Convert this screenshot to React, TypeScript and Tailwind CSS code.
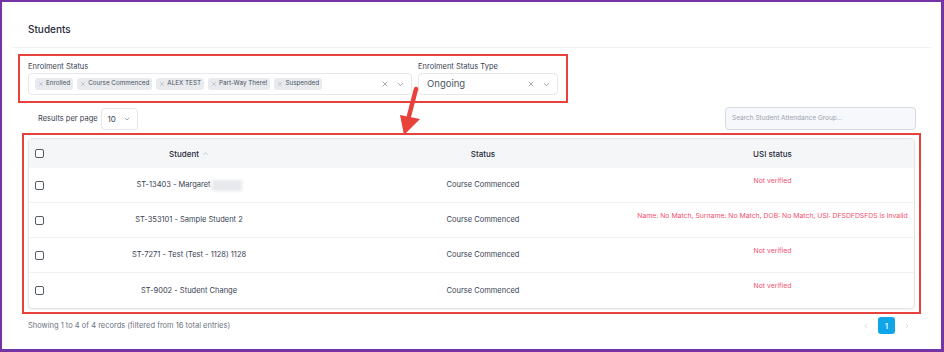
import React from "react";
import { X, ChevronDown, ChevronUp, ChevronLeft, ChevronRight } from "lucide-react";

const chips = ["Enrolled", "Course Commenced", "ALEX TEST", "Part-Way There!", "Suspended"];

const rows = [
  { student: "ST-13403 - Margaret", blur: true, status: "Course Commenced", usi: "Not verified" },
  { student: "ST-353101 - Sample Student 2", status: "Course Commenced", usi: "Name: No Match, Surname: No Match, DOB: No Match, USI: DFSDFDSFDS is Invalid" },
  { student: "ST-7271 - Test (Test - 1128) 1128", status: "Course Commenced", usi: "Not verified" },
  { student: "ST-9002 - Student Change", status: "Course Commenced", usi: "Not verified" },
];

const Checkbox = () => (
  <div className="w-[9px] h-[9px] rounded-[2px] border-[1.5px] border-[#555b63] bg-white" />
);

const Chip = ({ label }: { label: string }) => (
  <span className="flex items-center gap-[2px] h-[12px] px-[3px] rounded-[3px] bg-[#e8eaee] text-[6.3px] text-[#4b5563] whitespace-nowrap">
    <X className="w-[6px] h-[6px] text-[#9ca3af]" strokeWidth={2} />
    {label}
  </span>
);

export default function App() {
  return (
    <div className="relative w-[944px] h-[352px] overflow-hidden bg-white border-l-2 border-t-2 border-r-[3px] border-b-[3px] border-[#7434a6] font-['Inter',sans-serif]">
      <div className="mx-[10px]">
        <div className="px-[16px] pt-[20px] pb-[11px] border-b border-[#f0f1f3]">
          <h1 className="text-[10px] leading-[14px] font-medium text-[#1f2937]">Students</h1>
        </div>

        <div className="px-[16px]">
          <div className="mt-[6px] -mx-[10px] w-[550px] border-2 border-[#e8403a] px-[8px] pt-[6px] pb-[6px] flex gap-[6px]">
            <div className="w-[384px]">
              <div className="text-[7.5px] leading-[10px] text-[#374151] mb-[1px]">Enrolment Status</div>
              <div className="h-[22px] rounded-[4px] border border-[#e5e7eb] flex items-center pl-[6px] pr-[6px] gap-[4px]">
                <div className="flex flex-1 gap-[4px]">
                  {chips.map((c) => (
                    <Chip key={c} label={c} />
                  ))}
                </div>
                <X className="w-[8px] h-[8px] text-[#6b7280]" strokeWidth={1.8} />
                <ChevronDown className="w-[9px] h-[9px] text-[#6b7280] ml-[3px]" strokeWidth={1.8} />
              </div>
            </div>
            <div className="w-[140px]">
              <div className="text-[7.5px] leading-[10px] text-[#374151] mb-[1px]">Enrolment Status Type</div>
              <div className="h-[22px] rounded-[4px] border border-[#e5e7eb] flex items-center pl-[8px] pr-[6px] gap-[4px]">
                <span className="flex-1 text-[9.5px] text-[#4b5563]">Ongoing</span>
                <X className="w-[8px] h-[8px] text-[#6b7280]" strokeWidth={1.8} />
                <ChevronDown className="w-[9px] h-[9px] text-[#6b7280] ml-[3px]" strokeWidth={1.8} />
              </div>
            </div>
          </div>

          <div className="mt-[4px] flex items-center justify-between">
            <div className="flex items-center gap-[3px] pl-[10px]">
              <span className="text-[7.5px] text-[#374151]">Results per page</span>
              <div className="w-[37px] h-[22px] rounded-[4px] border border-[#e5e7eb] flex items-center justify-between px-[6px]">
                <span className="text-[8px] text-[#374151]">10</span>
                <ChevronDown className="w-[8px] h-[8px] text-[#6b7280]" strokeWidth={1.8} />
              </div>
            </div>
            <div className="w-[191px] h-[23px] rounded-[4px] border border-[#d6dae0] bg-[#f6f8fb] flex items-center px-[6px] mr-[-1px]">
              <span className="text-[6.5px] text-[#9aa1ad]">Search Student Attendance Group...</span>
            </div>
          </div>

          <div className="mt-[3px] -mx-[6px] border-2 border-[#e8403a] px-[4px] pt-[3px] pb-[3px]">
            <div className="rounded-[4px] border border-[#e2e4e8] shadow-[0_1px_2px_rgba(0,0,0,0.06)] overflow-hidden">
              <div className="grid grid-cols-[20px_280px_308px_minmax(0,1fr)] h-[29px] items-center bg-[#f5f6f8] text-[8px] font-medium text-[#1f2937]">
                <div className="pl-[6px]"><Checkbox /></div>
                <div className="flex items-center justify-center gap-[3px]">
                  Student <ChevronUp className="w-[7px] h-[7px] text-[#9ca3af]" strokeWidth={2} />
                </div>
                <div className="text-center">Status</div>
                <div className="text-center pr-[6px]">USI status</div>
              </div>
              {rows.map((r, i) => (
                <div
                  key={i}
                  className={
                    "grid grid-cols-[20px_280px_308px_minmax(0,1fr)] h-[35px] items-center text-[7.5px] text-[#374151] " +
                    (i < rows.length - 1 ? "border-b border-[#f0f1f3]" : "")
                  }
                >
                  <div className="pl-[6px]"><Checkbox /></div>
                  <div className="flex items-center justify-center">
                    {r.student}
                    {r.blur && <span className="inline-block ml-[1px] w-[30px] h-[11px] bg-[#e8e9ec] blur-[1.5px]" />}
                  </div>
                  <div className="text-center">{r.status}</div>
                  <div className="text-center text-[#f2506f] pb-[8px] pr-[6px] whitespace-nowrap text-[6.85px]">{r.usi}</div>
                </div>
              ))}
            </div>
          </div>

          <div className="mt-[3px] flex items-center justify-between h-[17px]">
            <span className="text-[7.5px] text-[#6b7280]">Showing 1 to 4 of 4 records (filtered from 16 total entries)</span>
            <div className="flex items-center gap-[8px] pr-[4px]">
              <ChevronLeft className="w-[8px] h-[8px] text-[#c4c8ce]" strokeWidth={2} />
              <div className="w-[17px] h-[17px] rounded-[3px] bg-[#0ea5e9] text-white text-[8px] font-medium flex items-center justify-center">1</div>
              <ChevronRight className="w-[8px] h-[8px] text-[#c4c8ce]" strokeWidth={2} />
            </div>
          </div>
        </div>
      </div>

      {/* annotation arrow */}
      <svg className="absolute left-[392px] top-[84px]" width="32" height="52" viewBox="0 0 32 52">
        <line x1="22" y1="3" x2="15" y2="30" stroke="#e8403a" strokeWidth="4.5" strokeLinecap="round" />
        <polygon points="6,29 26,33 10,49" fill="#e8403a" />
      </svg>
    </div>
  );
}
